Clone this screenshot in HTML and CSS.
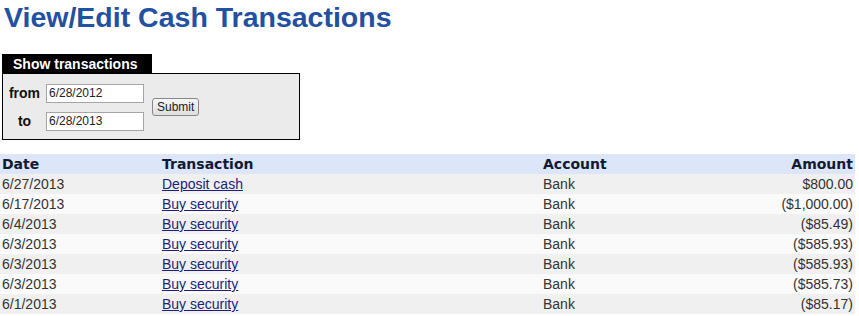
FILE: index.html
```html
<!DOCTYPE html>
<html lang="en">
<head>
    <meta charset="UTF-8">
    <title>View/Edit Cash Transactions</title>
    <link rel="stylesheet" href="styles.css">
</head>
<body>
    <h1 class="title">View/Edit Cash Transactions</h1>

    <form class="filter">
        <div class="filter-legend">Show transactions</div>
        <div class="filter-box">
            <div class="filter-fields">
                <label for="fromDate">from</label>
                <input type="text" id="fromDate" value="6/28/2012">
                <label for="toDate">to</label>
                <input type="text" id="toDate" value="6/28/2013">
            </div>
            <button type="button" class="submit">Submit</button>
        </div>
    </form>

    <table class="transactions">
        <thead>
            <tr>
                <th class="col-date">Date</th>
                <th class="col-trans">Transaction</th>
                <th class="col-account">Account</th>
                <th class="col-amount">Amount</th>
            </tr>
        </thead>
        <tbody>
            <tr><td>6/27/2013</td><td><a href="#">Deposit cash</a></td><td>Bank</td><td class="col-amount">$800.00</td></tr>
            <tr><td>6/17/2013</td><td><a href="#">Buy security</a></td><td>Bank</td><td class="col-amount">($1,000.00)</td></tr>
            <tr><td>6/4/2013</td><td><a href="#">Buy security</a></td><td>Bank</td><td class="col-amount">($85.49)</td></tr>
            <tr><td>6/3/2013</td><td><a href="#">Buy security</a></td><td>Bank</td><td class="col-amount">($585.93)</td></tr>
            <tr><td>6/3/2013</td><td><a href="#">Buy security</a></td><td>Bank</td><td class="col-amount">($585.93)</td></tr>
            <tr><td>6/3/2013</td><td><a href="#">Buy security</a></td><td>Bank</td><td class="col-amount">($585.73)</td></tr>
            <tr><td>6/1/2013</td><td><a href="#">Buy security</a></td><td>Bank</td><td class="col-amount">($85.17)</td></tr>
        </tbody>
    </table>
</body>
</html>
```

FILE: styles.css
```css
body {
    margin: 0;
    font-family: "Liberation Sans", Arial, sans-serif;
    font-size: 14px;
    color: #333;
    background: #fff;
}
.title {
    margin: 0;
    padding: 2px 0 0 4px;
    font-size: 28.5px;
    line-height: 31px;
    color: #2350a0;
}
.filter {
    margin: 21px 0 0 2px;
}
.filter-legend {
    display: inline-block;
    width: 150px;
    height: 19px;
    line-height: 20px;
    padding-left: 11px;
    box-sizing: border-box;
    background: #000;
    color: #fff;
    font-weight: bold;
}
.filter-box {
    width: 298px;
    height: 67px;
    box-sizing: border-box;
    border: 1px solid #000;
    background: #ebebeb;
    display: flex;
    align-items: center;
    gap: 8px;
    padding: 0 0 0 4px;
}
.filter-fields {
    display: grid;
    grid-template-columns: 35px 98px;
    row-gap: 9px;
    column-gap: 4px;
    align-items: center;
    margin-top: 1px;
}
.filter-fields label {
    font-weight: bold;
    color: #111;
    text-align: center;
}
.filter-fields input {
    width: 98px;
    height: 19px;
    box-sizing: border-box;
    border: 1px solid #a5a5a5;
    padding: 0 2px;
    font-family: "Liberation Sans", Arial, sans-serif;
    font-size: 12px;
    color: #222;
    background: #fff;
}
.submit {
    height: 18px;
    padding: 0 4px;
    font-family: "Liberation Sans", Arial, sans-serif;
    font-size: 12px;
    color: #222;
    background: linear-gradient(#f6f6f6, #dedede);
    border: 1px solid #888;
    border-radius: 3px;
    margin-top: 1px;
}
.transactions {
    margin-top: 14px;
    width: 855px;
    border-collapse: collapse;
}
.transactions th,
.transactions td {
    height: 19px;
    padding: 1px 2px 0;
    line-height: 19px;
    text-align: left;
    white-space: nowrap;
}
.transactions th {
    font-family: "DejaVu Sans", Verdana, sans-serif;
    font-size: 14px;
    color: #111a33;
    background: #dce6f8;
}
.transactions tbody tr:nth-child(odd) {
    background: #f0f0f0;
}
.transactions tbody tr:nth-child(even) {
    background: #fafafa;
}
.transactions a {
    color: #1c1c7a;
}
.col-date {
    width: 156px;
}
.col-trans {
    width: 377px;
}
.transactions .col-amount {
    text-align: right;
}
```
